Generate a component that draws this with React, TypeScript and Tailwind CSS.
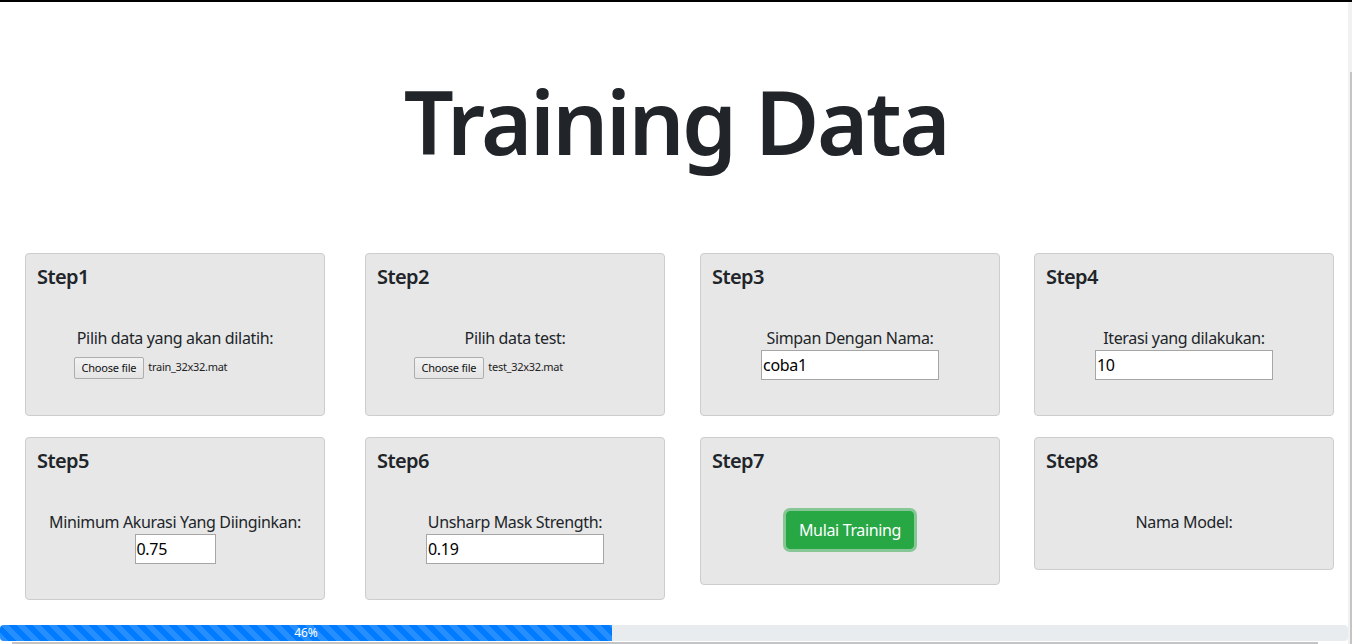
import React from 'react';

type Step = {
  title: string;
  body: React.ReactNode;
};

function FileField({ name }: { name: string }) {
  return (
    <div className="mx-auto mb-[1px] mt-[7px] flex h-[22px] w-[203px] items-center">
      <button
        type="button"
        className="h-[22px] rounded-[2px] border border-[#adadad] bg-[linear-gradient(#f2f2f2,#e4e4e4)] px-[7px] text-[11px] leading-none tracking-[-0.2px] text-[#111]"
      >
        Choose file
      </button>
      <span className="ml-[4px] text-[11px] tracking-[-0.3px] text-[#222]">{name}</span>
    </div>
  );
}

function TextField({ value, width }: { value: string; width: string }) {
  return (
    <div className="flex justify-center">
      <input
        readOnly
        value={value}
        className={`h-[30px] ${width} border border-[#a6a6a6] bg-white px-[1px] text-[16px] tracking-[-0.3px] text-black outline-none`}
      />
    </div>
  );
}

function Label({ children }: { children: React.ReactNode }) {
  return <p className="text-[16px] leading-[24px] tracking-[-0.35px] text-[#212529]">{children}</p>;
}

const steps: Step[] = [
  {
    title: 'Step1',
    body: (
      <>
        <Label>Pilih data yang akan dilatih:</Label>
        <FileField name="train_32x32.mat" />
      </>
    ),
  },
  {
    title: 'Step2',
    body: (
      <>
        <Label>Pilih data test:</Label>
        <FileField name="test_32x32.mat" />
      </>
    ),
  },
  {
    title: 'Step3',
    body: (
      <>
        <Label>Simpan Dengan Nama:</Label>
        <TextField value="coba1" width="w-[178px]" />
      </>
    ),
  },
  {
    title: 'Step4',
    body: (
      <>
        <Label>Iterasi yang dilakukan:</Label>
        <TextField value="10" width="w-[178px]" />
      </>
    ),
  },
  {
    title: 'Step5',
    body: (
      <>
        <Label>Minimum Akurasi Yang Diinginkan:</Label>
        <TextField value="0.75" width="w-[81px]" />
      </>
    ),
  },
  {
    title: 'Step6',
    body: (
      <>
        <Label>Unsharp Mask Strength:</Label>
        <TextField value="0.19" width="w-[178px]" />
      </>
    ),
  },
  {
    title: 'Step7',
    body: (
      <div className="flex justify-center pt-[1px]">
        <button
          type="button"
          className="h-[38px] rounded-[4px] border border-[#28a745] bg-[#28a745] px-3 text-[16px] tracking-[-0.35px] text-white shadow-[0_0_0_3px_rgba(40,167,69,0.5)]"
        >
          Mulai Training
        </button>
      </div>
    ),
  },
  {
    title: 'Step8',
    body: <Label>Nama Model:</Label>,
  },
];

export default function App() {
  return (
    <div className="relative h-[644px] overflow-hidden border-t-2 border-black bg-white font-['Noto_Sans',sans-serif] text-[#212529]">
      <h1 className="mt-[67px] text-center text-[88px] font-semibold leading-[1.2] tracking-[-2.5px] text-[#212529]">
        Training Data
      </h1>

      <div className="mt-[78px] grid grid-cols-[340px_335px_334px_300px] items-start gap-y-[21px] pl-[25px]">
        {steps.map((s) => (
          <div
            key={s.title}
            className="w-[300px] rounded-[4px] border border-[#cdcdcd] bg-[#e7e7e7] px-[11px] pb-[35px] pt-[11px]"
          >
            <h5 className="text-[20px] font-semibold leading-[24px] tracking-[-0.6px] text-[#212529]">{s.title}</h5>
            <div className="mt-[37px] text-center">{s.body}</div>
          </div>
        ))}
      </div>

      <div className="absolute left-0 top-[623px] h-[16px] w-[1348px] overflow-hidden rounded-[4px] bg-[#e9ecef]">
        <div className="flex h-full w-[612px] items-center justify-center bg-[#007bff] bg-[linear-gradient(45deg,rgba(255,255,255,.15)_25%,transparent_25%,transparent_50%,rgba(255,255,255,.15)_50%,rgba(255,255,255,.15)_75%,transparent_75%,transparent)] bg-[length:16px_16px] text-[12px] leading-none text-white">
          46%
        </div>
      </div>
      <div className="absolute bottom-0 left-[12px] h-[2px] w-[1306px] bg-[#c4c4c4]" />

      <div className="absolute right-0 top-0 h-full w-[4px] bg-[#f1f1f1]">
        <div className="ml-[2px] mt-[70px] h-full w-[2px] bg-[#c4c4c4]" />
      </div>
    </div>
  );
}
